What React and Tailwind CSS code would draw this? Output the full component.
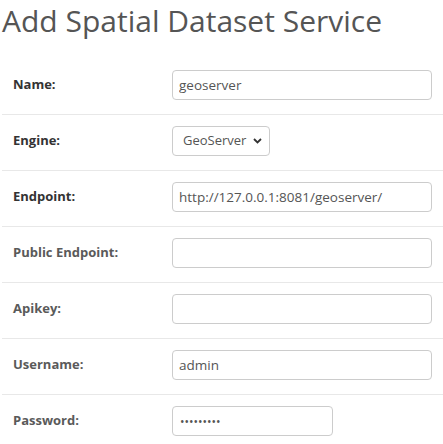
import React from 'react';

const fields = [
    { label: 'Name:', value: 'geoserver', required: true },
    { label: 'Engine:', type: 'select', value: 'GeoServer', required: true },
    { label: 'Endpoint:', value: 'http://127.0.0.1:8081/geoserver/', required: true },
    { label: 'Public Endpoint:', value: '' },
    { label: 'Apikey:', value: '' },
    { label: 'Username:', value: 'admin' },
    { label: 'Password:', type: 'password', value: 'geoserver' },
];

const Chevron = () => (
    <svg width="9" height="6" viewBox="0 0 9 6" className="absolute right-[8px] top-[12px] pointer-events-none">
        <path d="M1 1l3.5 3.5L8 1" fill="none" stroke="#333" strokeWidth="1.8" />
    </svg>
);

const Field = ({ field }) => {
    if (field.type === 'select') {
        return (
            <div className="relative w-[98px]">
                <select
                    defaultValue={field.value}
                    className="appearance-none w-full h-[30px] border border-[#ccc] rounded-[4px] bg-white pl-[10px] pr-[14px] text-[13px] text-[#555] outline-none"
                >
                    <option>GeoServer</option>
                </select>
                <Chevron />
            </div>
        );
    }
    if (field.type === 'password') {
        return (
            <input
                type="password"
                defaultValue={field.value}
                className="w-[161px] h-[30px] border border-[#ccc] rounded-[4px] bg-white px-[7px] text-[12px] text-[#555] outline-none"
            />
        );
    }
    return (
        <input
            type="text"
            defaultValue={field.value}
            className="w-full h-[30px] border border-[#ccc] rounded-[4px] bg-white px-[6px] text-[13.5px] text-[#555] outline-none"
        />
    );
};

export default function App() {
    return (
        <div className="w-[443px] h-[444px] bg-white overflow-hidden" style={{ fontFamily: '"Open Sans", sans-serif' }}>
            {/* TITLE */}
            <h1 className="mt-[4px] mb-[21px] pl-[2px] text-[30px] leading-[33px] font-normal text-[#555]">
                Add Spatial Dataset Service
            </h1>

            {/* FORM ROWS */}
            <div className="ml-[2px]">
                {fields.map((f, i) => (
                    <div
                        key={f.label}
                        className={`grid grid-cols-[170px_1fr] items-center pr-[11px] pb-[14px] ${i === 0 ? 'pt-[12px]' : 'pt-[11px] border-t border-[#e8e8e8]'}`}
                    >
                        <label className={`pl-[11px] text-[13px] font-bold ${f.required ? 'text-[#333]' : 'text-[#5a5a5a]'}`}>
                            {f.label}
                        </label>
                        <div>
                            <Field field={f} />
                        </div>
                    </div>
                ))}
            </div>
        </div>
    );
}
